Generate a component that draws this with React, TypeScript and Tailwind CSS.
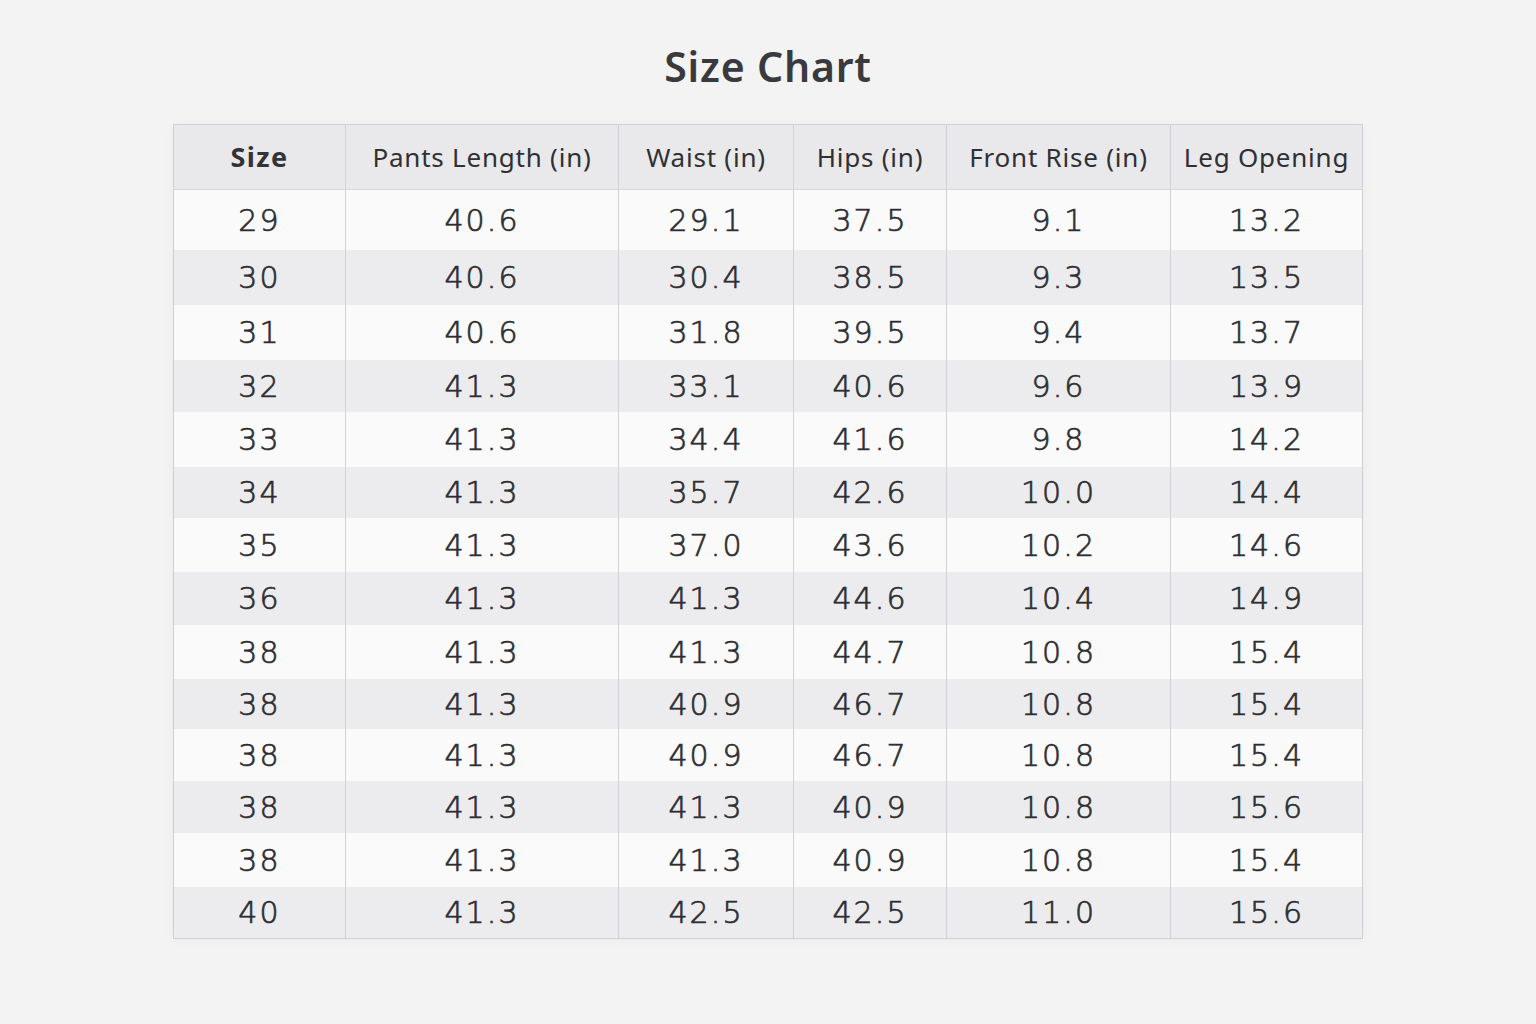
import React from 'react';

const headers = ['Size', 'Pants Length (in)', 'Waist (in)', 'Hips (in)', 'Front Rise (in)', 'Leg Opening'];

const rows: { h: string; cells: string[] }[] = [
    { h: 'h-[60px]', cells: ['29', '40.6', '29.1', '37.5', '9.1', '13.2'] },
    { h: 'h-[55px]', cells: ['30', '40.6', '30.4', '38.5', '9.3', '13.5'] },
    { h: 'h-[55px]', cells: ['31', '40.6', '31.8', '39.5', '9.4', '13.7'] },
    { h: 'h-[52px]', cells: ['32', '41.3', '33.1', '40.6', '9.6', '13.9'] },
    { h: 'h-[55px]', cells: ['33', '41.3', '34.4', '41.6', '9.8', '14.2'] },
    { h: 'h-[51px]', cells: ['34', '41.3', '35.7', '42.6', '10.0', '14.4'] },
    { h: 'h-[54px]', cells: ['35', '41.3', '37.0', '43.6', '10.2', '14.6'] },
    { h: 'h-[53px]', cells: ['36', '41.3', '41.3', '44.6', '10.4', '14.9'] },
    { h: 'h-[54px]', cells: ['38', '41.3', '41.3', '44.7', '10.8', '15.4'] },
    { h: 'h-[50px]', cells: ['38', '41.3', '40.9', '46.7', '10.8', '15.4'] },
    { h: 'h-[52px]', cells: ['38', '41.3', '40.9', '46.7', '10.8', '15.4'] },
    { h: 'h-[52px]', cells: ['38', '41.3', '41.3', '40.9', '10.8', '15.6'] },
    { h: 'h-[54px]', cells: ['38', '41.3', '41.3', '40.9', '10.8', '15.4'] },
    { h: 'h-[51px]', cells: ['40', '41.3', '42.5', '42.5', '11.0', '15.6'] },
];

const cols = 'grid grid-cols-[172px_273px_175px_153px_224px_191px]';

export default function App() {
    return (
        <div className="min-h-screen w-full bg-[#f3f3f4] flex flex-col items-center font-['Noto_Sans',sans-serif] text-[#303034]">
            <h1 className="mt-[40px] text-[41px] leading-[52px] font-semibold text-[#3a3a3e] tracking-[0.02em]">
                Size Chart
            </h1>

            <div className="mt-[32px] w-[1190px] border border-[#cfcfd4] bg-white shadow-[0_2px_10px_rgba(0,0,0,0.04)]">
                {/* header */}
                <div className={`${cols} h-[65px] bg-[#e9e9ec] border-b border-[#d6d6da]`}>
                    {headers.map((t, i) => (
                        <div
                            key={t}
                            className={`flex items-center justify-center ${i === 0 ? 'text-[27px] font-bold text-[#333337] tracking-[0.05em]' : 'text-[26px] font-normal tracking-[0.03em]'} ${i < headers.length - 1 ? 'border-r border-[#d2d2d6]' : ''}`}
                        >
                            {t}
                        </div>
                    ))}
                </div>

                {/* body */}
                {rows.map((r, ri) => (
                    <div key={ri} className={`${cols} ${r.h} ${ri % 2 === 0 ? 'bg-[#fafafb]' : 'bg-[#ececee]'}`}>
                        {r.cells.map((c, ci) => (
                            <div
                                key={ci}
                                className={`flex items-center justify-center font-['DejaVu_Sans',sans-serif] text-[30px] font-extralight tracking-[0.07em] text-[#2e2e32] [-webkit-text-stroke:0.7px_#2e2e32] ${ci < r.cells.length - 1 ? 'border-r border-[#d2d2d6]' : ''}`}
                            >
                                {c}
                            </div>
                        ))}
                    </div>
                ))}
            </div>
        </div>
    );
}
